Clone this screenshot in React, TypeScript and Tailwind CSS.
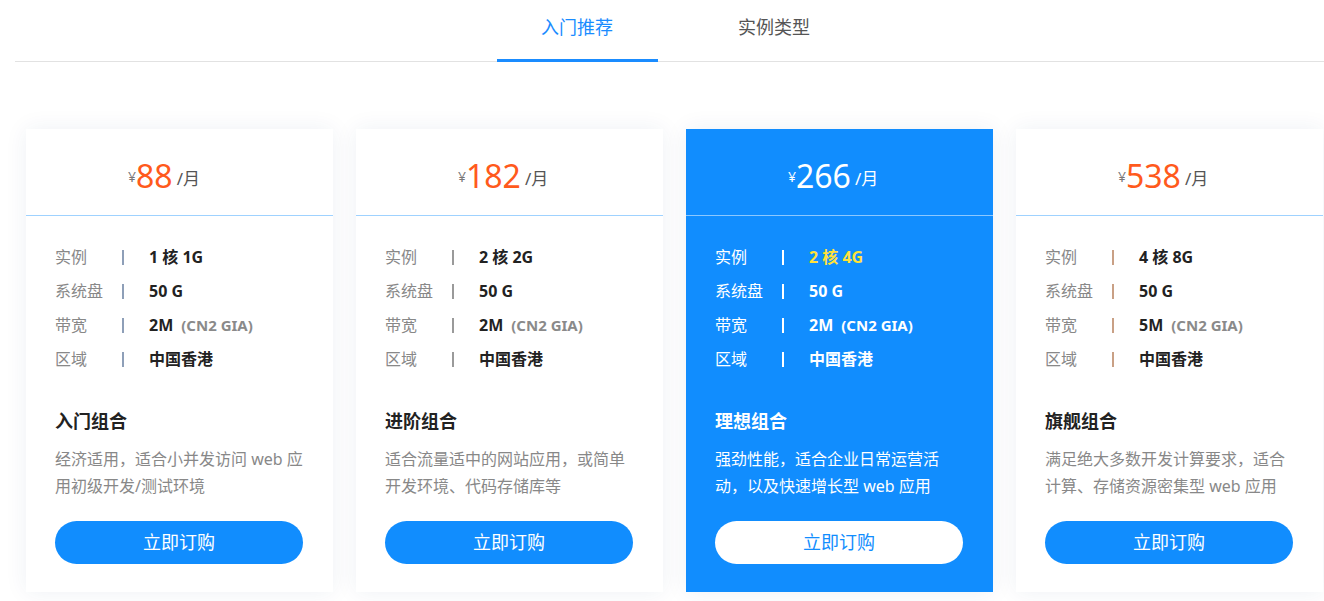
import React from "react"

type Plan = {
  price: string
  cores: string
  disk: string
  bw: string
  name: string
  desc: string
  sep: string
  featured?: boolean
}

const plans: Plan[] = [
  {
    price: "88",
    cores: "1 核 1G",
    disk: "50 G",
    bw: "2M",
    name: "入门组合",
    desc: "经济适用，适合小并发访问 web 应用初级开发/测试环境",
    sep: "bg-[#8e9fb8]",
  },
  {
    price: "182",
    cores: "2 核 2G",
    disk: "50 G",
    bw: "2M",
    name: "进阶组合",
    desc: "适合流量适中的网站应用，或简单开发环境、代码存储库等",
    sep: "bg-[#9a9a9a]",
  },
  {
    price: "266",
    cores: "2 核 4G",
    disk: "50 G",
    bw: "2M",
    name: "理想组合",
    desc: "强劲性能，适合企业日常运营活动，以及快速增长型 web 应用",
    sep: "bg-white",
    featured: true,
  },
  {
    price: "538",
    cores: "4 核 8G",
    disk: "50 G",
    bw: "5M",
    name: "旗舰组合",
    desc: "满足绝大多数开发计算要求，适合计算、存储资源密集型 web 应用",
    sep: "bg-[#c9a085]",
  },
]

function Row({ label, sep, featured, children }: { label: string; sep: string; featured?: boolean; children: React.ReactNode }) {
  return (
    <div className="flex h-[34px] items-center">
      <div className={`w-[67px] text-[16px] ${featured ? "text-white" : "text-[#888]"}`}>{label}</div>
      <div className={`h-[15px] w-[2px] ${sep}`} />
      <div className="ml-[25px] flex items-baseline">{children}</div>
    </div>
  )
}

function Card({ p }: { p: Plan }) {
  const f = p.featured
  const val = f ? "text-white" : "text-[#222]"
  return (
    <div
      className={`flex w-[307px] flex-col shadow-[0_0_22px_rgba(30,60,110,0.07)] ${
        f ? "bg-[#118dfe]" : "bg-white"
      }`}
    >
      <div className="flex h-[86px] items-center pl-[102px] pt-[8px]">
        <span className={`text-[14px] ${f ? "text-white" : "text-[#777]"}`}>¥</span>
        <span className={`text-[32px] leading-[40px] ${f ? "text-white" : "text-[#ff5a1c]"}`}>{p.price}</span>
        <span className={`ml-[4px] mt-[6px] text-[17px] ${f ? "text-white" : "text-[#555]"}`}>/月</span>
      </div>
      <div className={`h-px ${f ? "bg-[#8cc8ff]" : "bg-[#9fd2ff]"}`} />

      <div className="pl-[29px] pr-[29px] pt-[24px]">
        <Row label="实例" sep={p.sep} featured={f}>
          <span className={`text-[16px] font-bold ${f ? "text-[#ffe23a]" : "text-[#222]"}`}>{p.cores}</span>
        </Row>
        <Row label="系统盘" sep={p.sep} featured={f}>
          <span className={`text-[16px] font-bold ${val}`}>{p.disk}</span>
        </Row>
        <Row label="带宽" sep={p.sep} featured={f}>
          <span className={`text-[16px] font-bold ${val}`}>{p.bw}</span>
          <span className={`ml-[8px] text-[15px] font-bold ${f ? "text-white" : "text-[#8a8a8a]"}`}>(CN2 GIA)</span>
        </Row>
        <Row label="区域" sep={p.sep} featured={f}>
          <span className={`text-[16px] font-bold ${val}`}>中国香港</span>
        </Row>

        <div className={`mt-[33px] text-[18px] font-bold leading-[24px] ${f ? "text-white" : "text-[#222]"}`}>{p.name}</div>
        <p className={`mt-[13px] h-[54px] text-[16px] leading-[27px] ${f ? "text-white" : "text-[#888]"}`}>{p.desc}</p>

        <button
          className={`mt-[21px] flex h-[43px] w-[248px] items-center justify-center rounded-full text-[18px] ${
            f ? "bg-white text-[#118dfe]" : "bg-[#118dfe] text-white"
          }`}
        >
          立即订购
        </button>
      </div>
      <div className="h-[28px]" />
    </div>
  )
}

export default function App() {
  return (
    <div
      className="min-h-[601px] w-[1324px] bg-white"
      style={{ fontFamily: '"Noto Sans", "Noto Sans CJK SC", sans-serif' }}
    >
      <div className="ml-[15px] flex justify-center border-b border-[#e2e2e2] pl-[12px]">
        <div className="-mb-px flex gap-[36px]">
          <div className="flex h-[62px] w-[161px] justify-center border-b-[3px] border-[#1a8cff] pt-[14px] text-[18px] text-[#1a8cff]">
            入门推荐
          </div>
          <div className="flex h-[62px] w-[161px] justify-center pt-[14px] text-[18px] text-[#555]">
            实例类型
          </div>
        </div>
      </div>

      <div className="mt-[67px] flex gap-[23px] pl-[26px]">
        {plans.map((p) => (
          <Card key={p.price} p={p} />
        ))}
      </div>
    </div>
  )
}
